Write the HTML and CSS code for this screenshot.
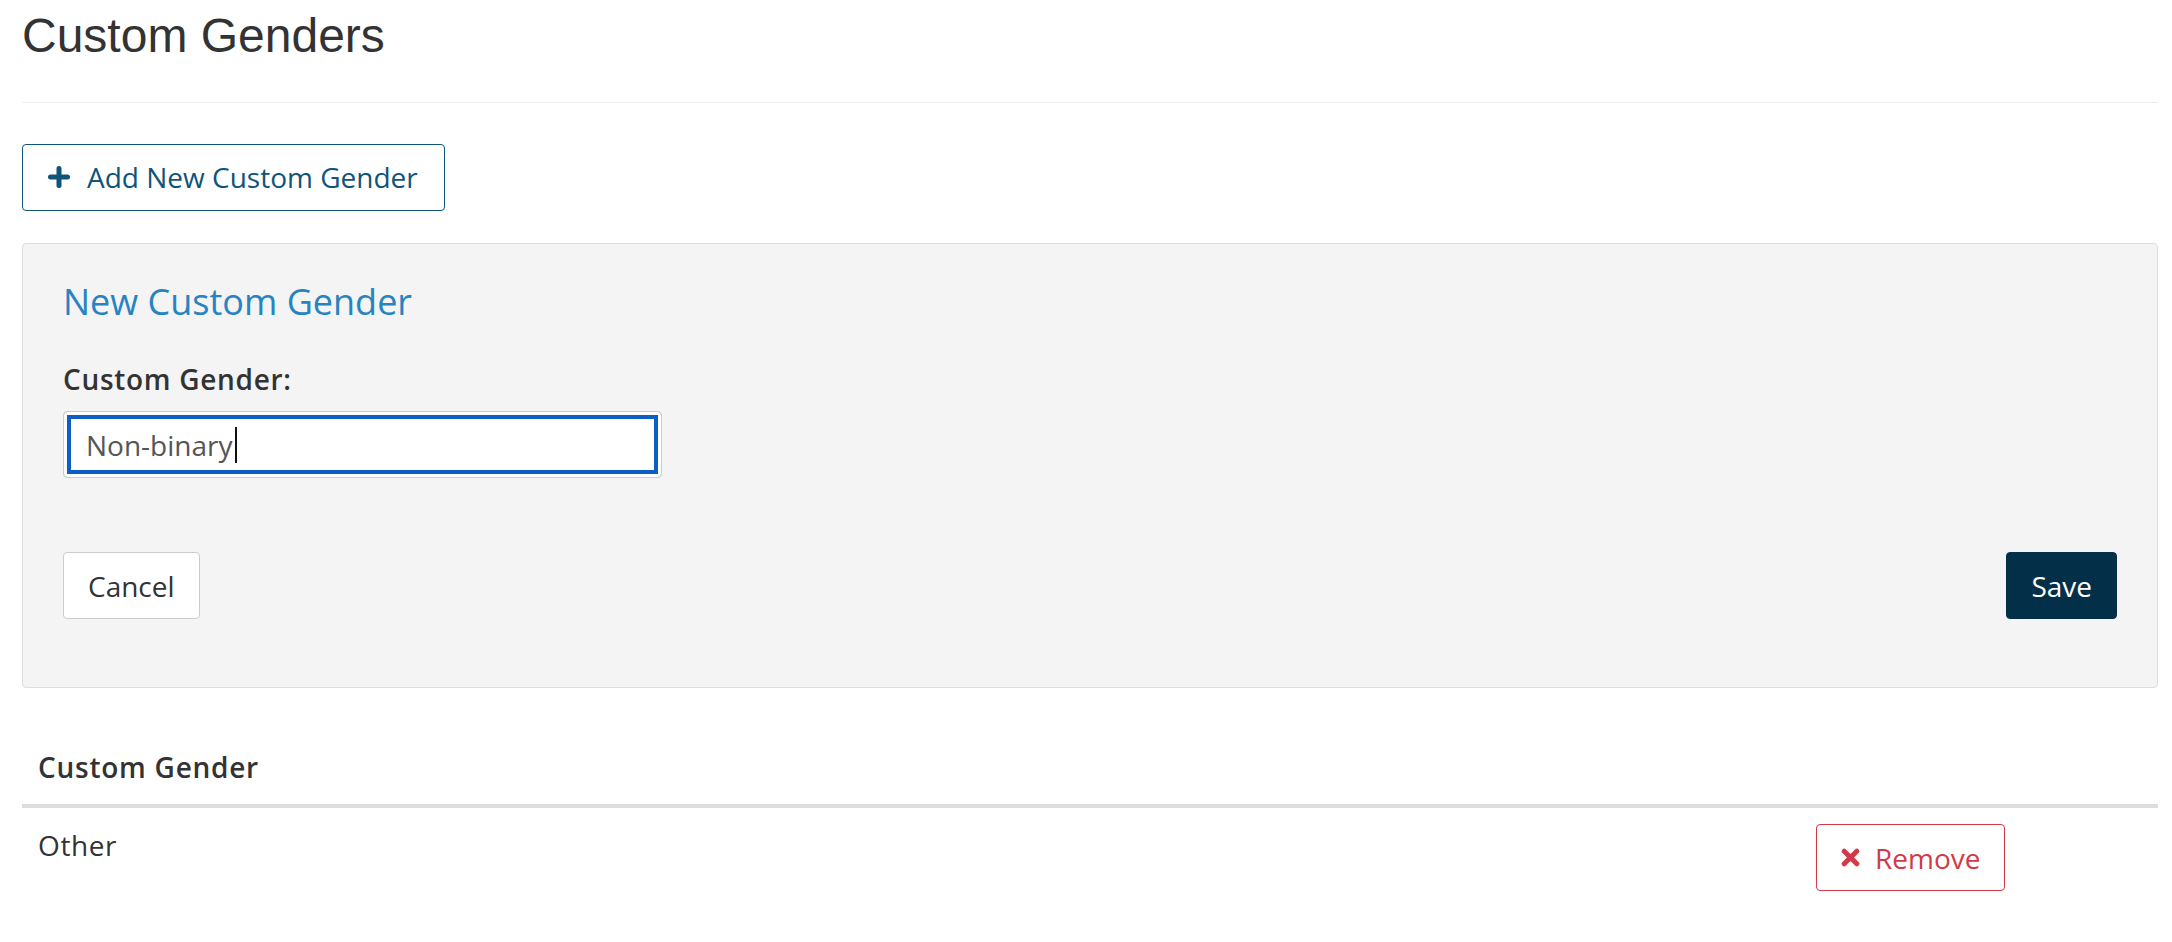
FILE: index.html
```html
<!DOCTYPE html>
<html lang="en">
<head>
<meta charset="utf-8">
<title>Custom Genders</title>
<link rel="stylesheet" href="styles.css">
</head>
<body>
<div class="page">
  <h1 class="title">Custom Genders</h1>
  <div class="divider"></div>

  <button class="btn btn-add" type="button">
    <svg class="icon-plus" viewBox="0 0 22 22" aria-hidden="true">
      <path d="M11 2.5V19.5M2.5 11H19.5" stroke="currentColor" stroke-width="5" stroke-linecap="round" fill="none"/>
    </svg>
    <span>Add New Custom Gender</span>
  </button>

  <section class="panel">
    <h2 class="panel-title">New Custom Gender</h2>
    <label class="field-label">Custom Gender:</label>
    <div class="text-input"><span class="input-value">Non-binary</span><span class="caret"></span></div>
    <div class="panel-actions">
      <button class="btn btn-default" type="button">Cancel</button>
      <button class="btn btn-primary" type="button">Save</button>
    </div>
  </section>

  <table class="gender-table">
    <colgroup>
      <col class="col-name">
      <col class="col-actions">
    </colgroup>
    <thead>
      <tr>
        <th>Custom Gender</th>
        <th></th>
      </tr>
    </thead>
    <tbody>
      <tr>
        <td class="name-cell">Other</td>
        <td>
          <button class="btn btn-remove" type="button">
            <svg class="icon-x" viewBox="0 0 19 19" aria-hidden="true">
              <path d="M3.2 3.2L15.8 15.8M15.8 3.2L3.2 15.8" stroke="currentColor" stroke-width="5" stroke-linecap="round" fill="none"/>
            </svg>
            <span>Remove</span>
          </button>
        </td>
      </tr>
    </tbody>
  </table>
</div>
</body>
</html>
```

FILE: styles.css
```css
* {
  box-sizing: border-box;
}

html, body {
  margin: 0;
  padding: 0;
  background: #ffffff;
}

body {
  font-family: "Open Sans", "Liberation Sans", sans-serif;
  color: #333333;
}

.page {
  padding: 10px 14px 30px 22px;
}

.title {
  margin: 0;
  font-family: "Liberation Sans", Arial, sans-serif;
  font-weight: 400;
  font-size: 48px;
  line-height: 52.8px;
  color: #333333;
}

.divider {
  height: 1px;
  background: #eeeeee;
  margin-top: 39px;
  margin-bottom: 41px;
}

.btn {
  font-family: "Open Sans", "Liberation Sans", sans-serif;
  font-size: 28px;
  line-height: 42px;
  padding: 11.5px 24px;
  border-radius: 4px;
  border: 1px solid #cccccc;
  background: #ffffff;
  color: #333333;
  cursor: pointer;
  margin: 0;
}

.btn-add {
  display: inline-flex;
  align-items: center;
  gap: 17px;
  padding: 11.5px 26px 11.5px 25px;
  border-color: #0f5479;
  color: #0f5479;
}

.icon-plus {
  width: 22px;
  height: 22px;
  display: block;
}

.panel {
  margin-top: 32px;
  background: #f4f4f4;
  border: 1px solid #dddddd;
  border-radius: 4px;
  padding: 36px 40px 68px 40px;
}

.panel-title {
  margin: 0 0 35px 0;
  font-weight: 400;
  font-size: 36px;
  line-height: 43.2px;
  color: #2783c1;
}

.field-label {
  display: block;
  font-weight: 600;
  letter-spacing: 0.7px;
  font-size: 28px;
  line-height: 42px;
  color: #333333;
  margin-bottom: 11px;
}

.text-input {
  width: 599px;
  height: 67px;
  display: flex;
  align-items: center;
  background: #ffffff;
  border: 1px solid #cccccc;
  border-radius: 4px;
  padding: 0 22px;
  font-size: 28px;
  line-height: 42px;
  color: #555555;
  box-shadow: inset 0 0 0 3px #ffffff, inset 0 0 0 7px #0b5ec4;
}

.caret {
  display: inline-block;
  width: 2px;
  height: 36px;
  background: #111111;
  margin-left: 2px;
}

.panel-actions {
  margin-top: 74px;
  display: flex;
  justify-content: space-between;
  align-items: center;
}

.btn-default {
  border-color: #cccccc;
  background: #ffffff;
  color: #333333;
}

.btn-primary {
  background: #042f48;
  border-color: #042f48;
  color: #ffffff;
}

.gender-table {
  margin-top: 42px;
  width: 100%;
  border-collapse: collapse;
  table-layout: fixed;
}

.col-name {
  width: 1778px;
}

.gender-table th,
.gender-table td {
  padding: 16px;
  text-align: left;
  vertical-align: top;
  font-size: 28px;
  line-height: 42px;
  color: #333333;
}

.gender-table th {
  font-weight: 600;
  letter-spacing: 0.75px;
  border-bottom: 4px solid #dddddd;
}

.gender-table td {
  font-weight: 400;
}

.gender-table .name-cell {
  letter-spacing: 0.6px;
}

.btn-remove {
  display: inline-flex;
  align-items: center;
  gap: 15px;
  border-color: #d13b48;
  color: #d13b48;
}

.icon-x {
  width: 19px;
  height: 19px;
  display: block;
}
```
